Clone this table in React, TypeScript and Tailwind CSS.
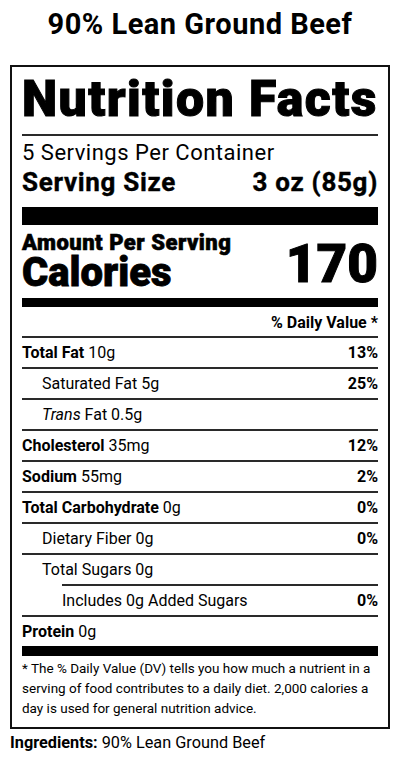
import React from "react";

type RowProps = {
  label: React.ReactNode;
  amount?: string;
  dv?: string;
  indent?: 0 | 1 | 2;
  bold?: boolean;
};

function Row({ label, amount, dv, indent = 0, bold = true }: RowProps) {
  const pad = indent === 0 ? "pl-0" : indent === 1 ? "pl-[20px]" : "pl-[40px]";
  return (
    <div className={`flex h-[29px] items-center justify-between text-[16px] leading-[20px] ${pad}`}>
      <span>
        <span className={bold ? "font-bold" : "font-normal"}>{label}</span>
        {amount ? <span className="font-normal"> {amount}</span> : null}
      </span>
      {dv ? <span className="font-bold">{dv}</span> : null}
    </div>
  );
}

function Line({ indent = false }: { indent?: boolean }) {
  return <div className={`h-[2px] bg-[#2a2a2a] ${indent ? "ml-[40px]" : ""}`} />;
}

export default function App() {
  return (
    <div className="w-[400px] bg-white pb-6 font-[Roboto,sans-serif] text-black">
      <h1 className="pt-2 text-center text-[29px] font-bold leading-[32px] tracking-[0.5px]">90% Lean Ground Beef</h1>
      <div className="mx-[10px] mt-[25px] border-2 border-[#111] px-[10px] pb-[9px] pt-[10px]">
        <div className="whitespace-nowrap text-[50px] font-black leading-[45px] tracking-[1.4px] [-webkit-text-stroke:1px_#000]">
          Nutrition Facts
        </div>
        <div className="mt-[12px] h-[2px] bg-[#2a2a2a]" />
        <div className="mt-[5px] whitespace-nowrap text-[22px] leading-[24px] tracking-[0.5px]">5 Servings Per Container</div>
        <div className="mt-[4px] flex justify-between whitespace-nowrap text-[26px] font-bold leading-[27px] tracking-[0.7px] [-webkit-text-stroke:0.4px_#000]">
          <span>Serving Size</span>
          <span>3 oz (85g)</span>
        </div>
        <div className="mt-[11px] h-[18px] bg-black" />
        <div className="mt-[8px] flex items-start justify-between">
          <div className="flex flex-col">
            <span className="whitespace-nowrap text-[22px] font-black leading-[20px] tracking-[0.5px] [-webkit-text-stroke:0.6px_#000]">
              Amount Per Serving
            </span>
            <span className="text-[40px] font-black leading-[40px] [-webkit-text-stroke:0.8px_#000]">Calories</span>
          </div>
          <span className="mt-[5px] text-[53px] font-black leading-[52px] [-webkit-text-stroke:1px_#000]">170</span>
        </div>
        <div className="mt-[5px] h-[9px] bg-black" />
        <div className="mt-[6px] text-right text-[16px] font-bold leading-[20px]">% Daily Value *</div>
        <div className="mt-[3px]" />
        <Line />
        <Row label="Total Fat" amount="10g" dv="13%" />
        <Line />
        <Row label="Saturated Fat 5g" bold={false} indent={1} dv="25%" />
        <Line />
        <Row
          label={
            <span>
              <i>Trans</i> Fat 0.5g
            </span>
          }
          bold={false}
          indent={1}
        />
        <Line />
        <Row label="Cholesterol" amount="35mg" dv="12%" />
        <Line />
        <Row label="Sodium" amount="55mg" dv="2%" />
        <Line />
        <Row label="Total Carbohydrate" amount="0g" dv="0%" />
        <Line />
        <Row label="Dietary Fiber 0g" bold={false} indent={1} dv="0%" />
        <Line />
        <Row label="Total Sugars 0g" bold={false} indent={1} />
        <Line indent />
        <Row label="Includes 0g Added Sugars" bold={false} indent={2} dv="0%" />
        <Line />
        <Row label="Protein" amount="0g" />
        <div className="h-[10px] bg-black" />
        <p className="pt-[2px] text-[13.5px] leading-[20px]">
          * The % Daily Value (DV) tells you how much a nutrient in a serving of food contributes to a daily diet. 2,000
          calories a day is used for general nutrition advice.
        </p>
      </div>
      <div className="mx-[10px] mt-[4px] text-[16.3px] leading-[20px]">
        <span className="font-bold">Ingredients:</span> 90% Lean Ground Beef
      </div>
    </div>
  );
}
